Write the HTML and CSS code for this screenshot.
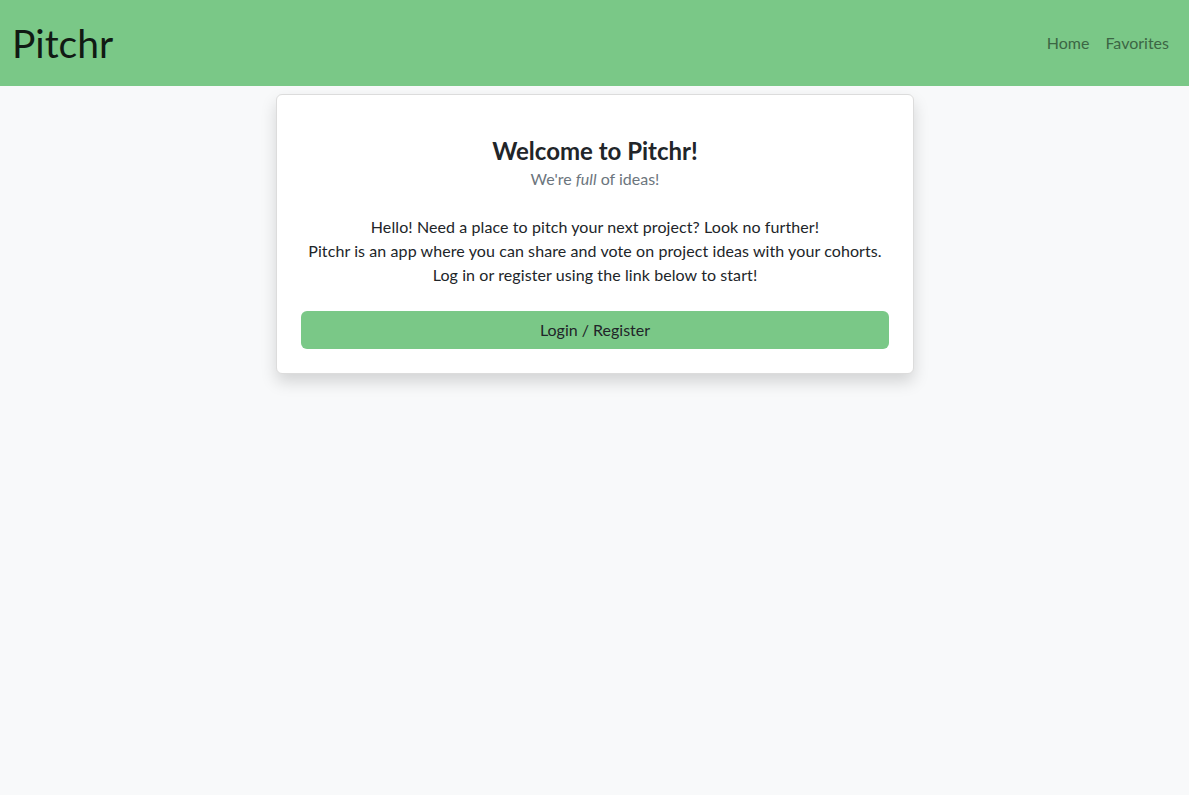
FILE: index.html
```html
<!DOCTYPE html>
<html lang="en">
<head>
<meta charset="utf-8">
<title>Pitchr</title>
<link rel="stylesheet" href="styles.css">
</head>
<body>
<nav class="navbar">
  <a class="brand" href="#">Pitchr</a>
  <div class="nav-links">
    <a href="#">Home</a>
    <a href="#">Favorites</a>
  </div>
</nav>
<main class="main">
  <section class="card">
    <h1 class="title">Welcome to Pitchr!</h1>
    <p class="subtitle">We're <em>full</em> of ideas!</p>
    <p class="intro">Hello! Need a place to pitch your next project? Look no further!<br>Pitchr is an app where you can share and vote on project ideas with your cohorts.<br>Log in or register using the link below to start!</p>
    <a class="btn" href="#">Login / Register</a>
  </section>
</main>
</body>
</html>
```
FILE: styles.css
```css
* { box-sizing: border-box; }
html, body { margin: 0; }
body {
  background: #f8f9fa;
  font-family: "Lato", "Open Sans", sans-serif;
  font-size: 16px;
  line-height: 24px;
  color: #212529;
  min-height: 795px;
}
.navbar {
  height: 86px;
  background: #7ac887;
  display: flex;
  align-items: center;
  justify-content: space-between;
  padding: 0 20px 0 12px;
}
.brand {
  font-size: 39px;
  line-height: 48px;
  color: #111a14;
  text-decoration: none;
}
.nav-links {
  display: flex;
  gap: 16px;
}
.nav-links a {
  color: #3c6644;
  text-decoration: none;
  font-size: 16px;
}
.main {
  display: flex;
  justify-content: center;
  padding: 8px 0 0 1px;
}
.card {
  width: 638px;
  background: #fff;
  border: 1px solid #dcdcdc;
  border-radius: 6px;
  box-shadow: 0 8px 16px rgba(0,0,0,0.15);
  padding: 24px;
  text-align: center;
}
.title {
  margin: 17px 0 2px;
  font-size: 24px;
  line-height: 29px;
  font-weight: 700;
}
.subtitle {
  margin: 0 0 24px;
  color: #6c757d;
}
.intro {
  margin: 0 0 24px;
  letter-spacing: 0.09px;
}
.btn {
  display: block;
  height: 38px;
  line-height: 38px;
  background: #7ac887;
  border-radius: 6px;
  color: #212529;
  text-decoration: none;
}
```
